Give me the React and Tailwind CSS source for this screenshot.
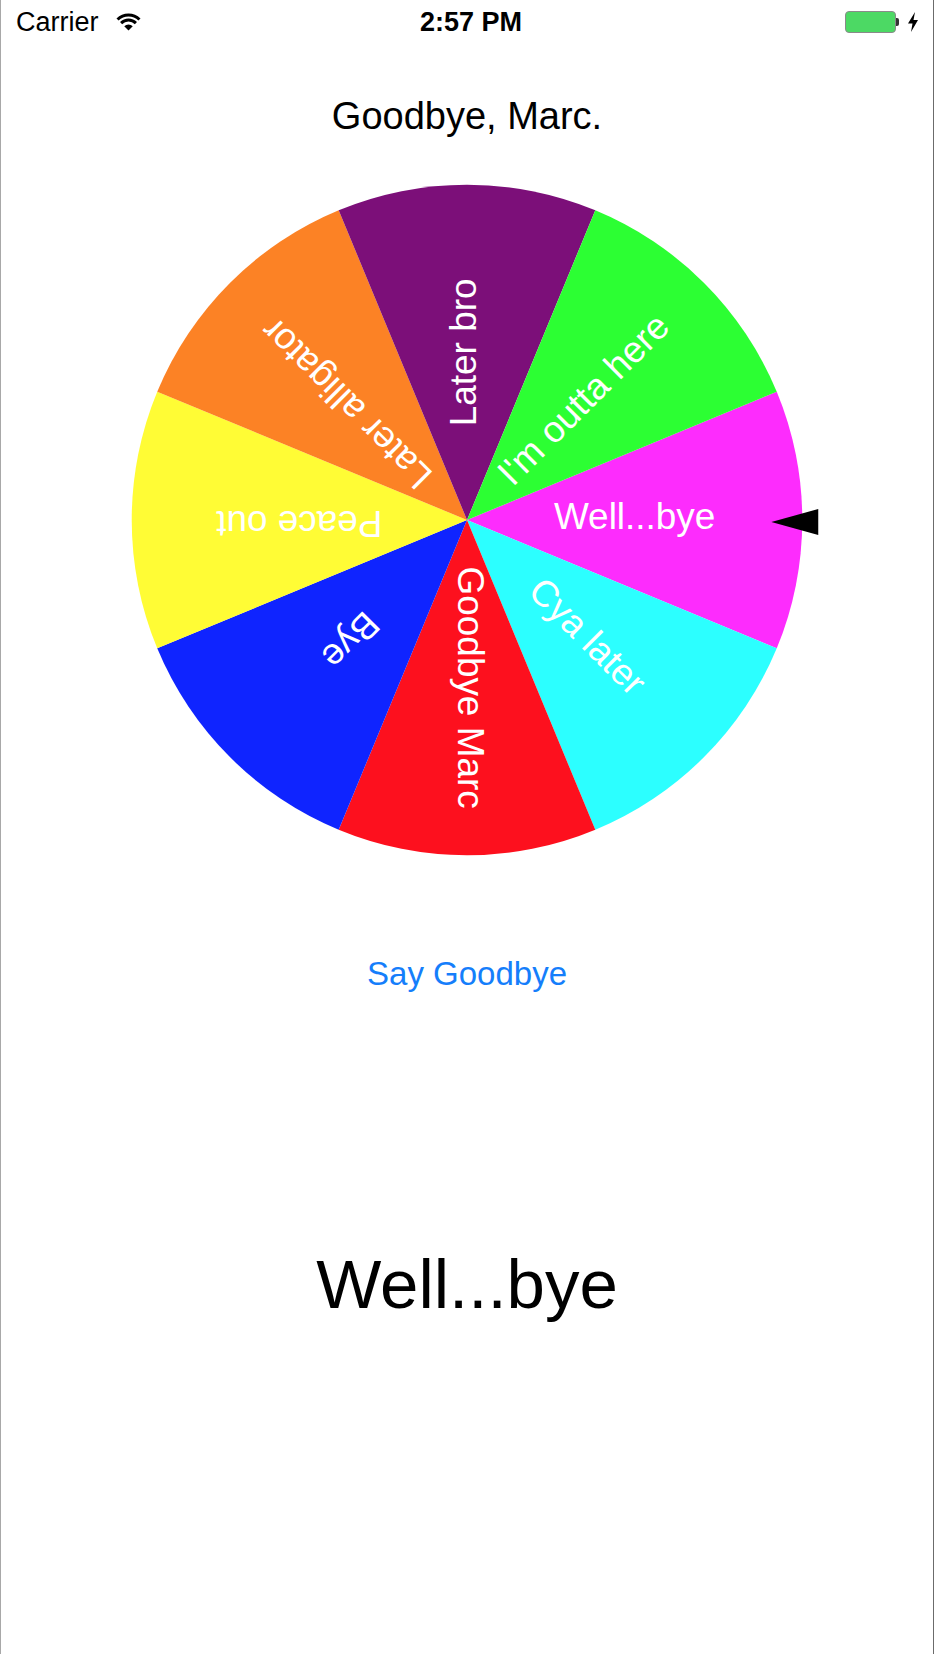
const CX = 467;
const CY = 345;
const R = 336;

const slices = [
  { angle: 0, color: "#fd2cfd", label: "Well...bye" },
  { angle: 45, color: "#2cffff", label: "Cya later" },
  { angle: 90, color: "#fd101e", label: "Goodbye Marc" },
  { angle: 135, color: "#0f24ff", label: "Bye" },
  { angle: 180, color: "#fffc35", label: "Peace out" },
  { angle: 225, color: "#fc8225", label: "Later alligator" },
  { angle: 270, color: "#7c0f79", label: "Later bro" },
  { angle: 315, color: "#2cff33", label: "I'm outta here" },
];

const point = (deg) => {
  const rad = (deg * Math.PI) / 180;
  return [CX + R * Math.cos(rad), CY + R * Math.sin(rad)];
};

const wedge = (a) => {
  const [x1, y1] = point(a - 22.5);
  const [x2, y2] = point(a + 22.5);
  return `M${CX} ${CY} L${x1} ${y1} A${R} ${R} 0 0 1 ${x2} ${y2} Z`;
};

const Wifi = () => (
  <svg width="25" height="18" viewBox="0 0 25 18">
    <path d="M12.5 17.5 L8.26 13.26 A6 6 0 0 1 16.74 13.26 Z" fill="black" />
    <path d="M5.08 10.08 A10.5 10.5 0 0 1 19.92 10.08" fill="none" stroke="black" strokeWidth="3" />
    <path d="M1.54 6.54 A15.5 15.5 0 0 1 23.46 6.54" fill="none" stroke="black" strokeWidth="3" />
  </svg>
);

const Battery = () => (
  <div className="flex items-center">
    <div className="w-[51px] h-[22px] rounded-[4px] border border-[#8a8a8a] bg-[#4cd964]" />
    <div className="w-[3px] h-[8px] rounded-r-[2px] bg-[#333]" />
    <svg className="ml-[9px]" width="10" height="20" viewBox="0 0 10 20">
      <polygon points="7,0 0,11.5 4.5,11.5 3,20 10,8 5.5,8" fill="black" />
    </svg>
  </div>
);

export default function App() {
  return (
    <div
      className="h-[1654px] bg-white border-l border-r border-l-[#a8a8a8] border-r-[#6b6b6b] flex flex-col"
      style={{ fontFamily: '"Liberation Sans", Arial, sans-serif' }}
    >
      {/* status bar */}
      <div className="h-[44px] grid grid-cols-[1fr_auto_1fr] items-center px-[15px] text-black">
        <div className="flex items-center gap-[17px]">
          <span className="text-[27px] leading-[27px]">Carrier</span>
          <Wifi />
        </div>
        <span className="text-[27px] leading-[27px] font-bold pl-[8px]">2:57 PM</span>
        <div className="flex justify-end pr-[0px]">
          <Battery />
        </div>
      </div>

      {/* title */}
      <h1 className="mt-[49px] text-center text-[38px] leading-[46px] text-black">Goodbye, Marc.</h1>

      {/* wheel */}
      <svg className="mt-[36px] block shrink-0" width="932" height="690" viewBox="0 0 934 690">
        {slices.map((s) => (
          <path key={s.label} d={wedge(s.angle)} fill={s.color} />
        ))}
        {slices.map((s) => (
          <text
            key={s.label + "-t"}
            x={CX + R / 2}
            y={CY + 9.5}
            transform={`rotate(${s.angle} ${CX} ${CY})`}
            textAnchor="middle"
            fill="white"
            fontSize="37"
            fontFamily='"Liberation Sans", Arial, sans-serif'
          >
            {s.label}
          </text>
        ))}
        <polygon points="772,347 819,334 819,360" fill="black" />
      </svg>

      {/* button */}
      <button className="mt-[89px] self-center text-[33px] leading-[40px] text-[#157efb]">Say Goodbye</button>

      {/* result */}
      <p className="mt-[251px] text-center text-[69px] leading-[80px] text-black">Well...bye</p>
    </div>
  );
}
